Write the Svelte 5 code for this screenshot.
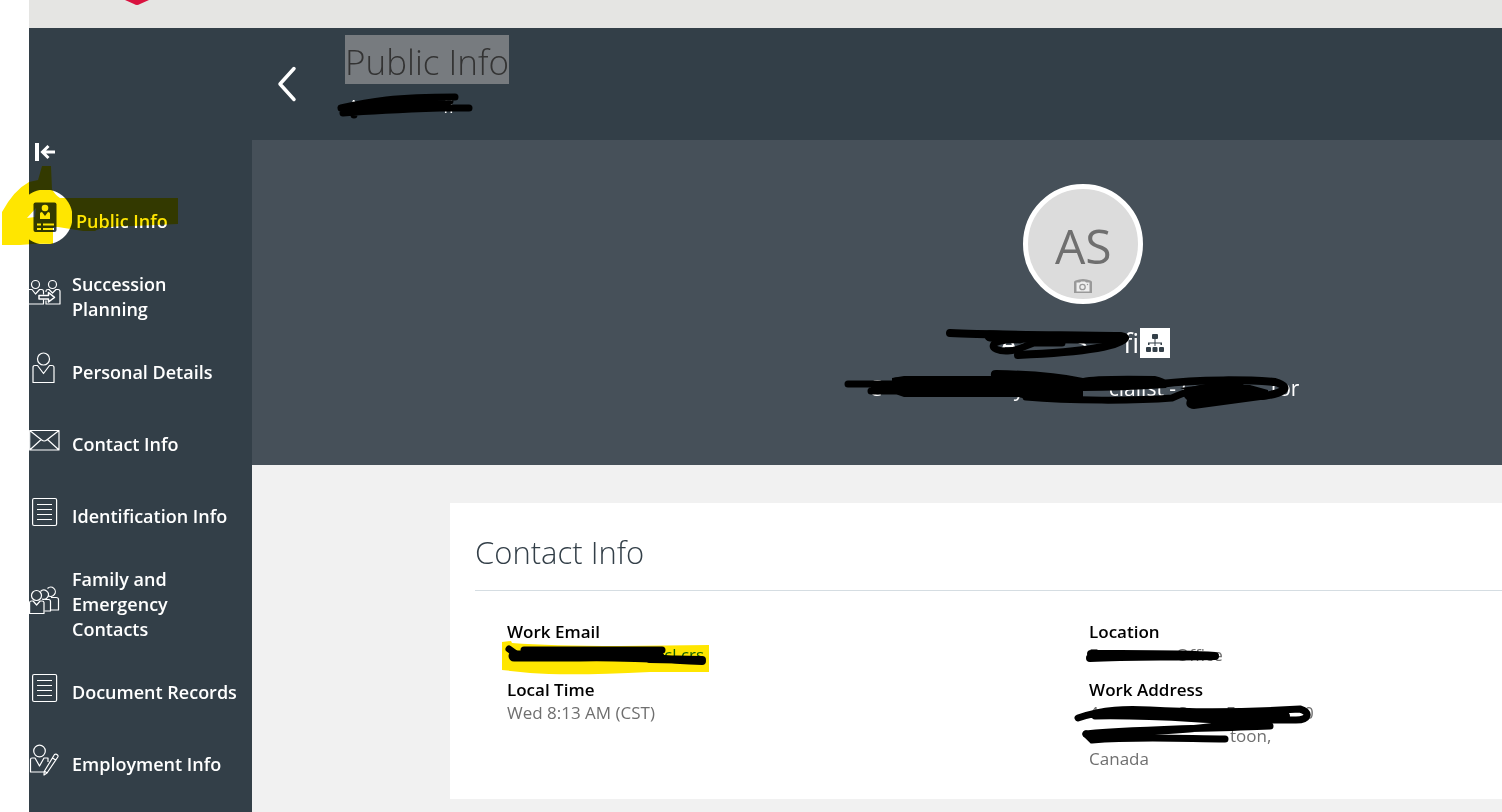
<script lang="ts">
	type Fragment = [text: string, span: number];

	const navItems = [
		{ label: 'Public Info', icon: 'badge', active: true },
		{ label: 'Succession Planning', icon: 'succession' },
		{ label: 'Personal Details', icon: 'person' },
		{ label: 'Contact Info', icon: 'mail' },
		{ label: 'Identification Info', icon: 'doc' },
		{ label: 'Family and Emergency Contacts', icon: 'family' },
		{ label: 'Document Records', icon: 'doc' },
		{ label: 'Employment Info', icon: 'employment' }
	];

	// what is left readable of each struck-out value, and how far it is to the next piece
	const subtitle: Fragment[] = [['A', 95], ['fi', 13]];
	const name: Fragment[] = [['A', 73], ['S', 50], ['fi', 17]];
	const jobTitle: Fragment[] = [['C', 145], ['y', 95], ['cialist - C', 162], ['tor', 27]];
	const email: Fragment[] = [['', 157], ['cl.crs', 38]];
	const location: Fragment[] = [['E', 87], ['Office', 46]];
	const street: Fragment[] = [['4', 89], ['St', 48], ['E', 78], ['0', 9]];
	const city: Fragment[] = [['', 141], ['toon,', 42]];
</script>

{#snippet pieces(list: Fragment[])}
	{#each list as [text, span]}
		<span class="piece" style="flex-grow: {span}">{text}</span>
	{/each}
{/snippet}

<div class="page">
	<div class="brand">
		<svg width="26" height="6" viewBox="0 0 26 6" aria-hidden="true">
			<path d="M1 0h24l-9 4q-3 2-6 0z" fill="#d9123f" />
		</svg>
	</div>

	<div class="shell">
		<nav>
			<button class="collapse" aria-label="Collapse menu">
				<svg width="22" height="20" viewBox="0 0 22 20" fill="none" stroke="#fff">
					<path d="M2 1v18" stroke-width="4" />
					<path d="M20 10H8M13.500 4L7.500 10l6 6" stroke-width="3" />
				</svg>
			</button>

			<ul>
				{#each navItems as item}
					<li>
						<a href="#top" class:active={item.active}>
							<span class="icon">
								<svg
									width="32"
									height="32"
									viewBox="0 0 32 32"
									fill="none"
									stroke="#fff"
									stroke-width="1.2"
									stroke-linejoin="round"
									aria-hidden="true"
								>
									{#if item.icon === 'badge'}
										<rect x="4.500" y="1.500" width="23" height="29.500" rx="2" fill="#333f48" stroke="none" />
										<g fill="#fff" stroke="none">
											<circle cx="16" cy="7" r="3.300" />
											<path d="M11 18v-5.500q0-1.500 2-1.500l3 4 3-4q2 0 2 1.500V18z" />
											<path d="M8 22.500h4v2H8zM14 22.500h11v2H14zM8 27h4v2H8zM14 27h11v2H14z" />
										</g>
									{:else if item.icon === 'succession'}
										<circle cx="6.500" cy="8.500" r="4" />
										<circle cx="23.500" cy="8.500" r="4" />
										<path d="M0 13.500h3l3.500 4.500 4-4.500h2q2 0 2 2v3M14.500 23.500v4.500H0" />
										<path d="M17 16v-1q0-1.500 2-1.500h1l3.500 3.500 3.500-3.500h2q2 0 2 2V28H17v-3.500" />
										<path d="M10 19.500h9.500v-3l6 4.800-6 4.700v-3H10z" stroke-width="1.500" />
									{:else if item.icon === 'person'}
										<circle cx="14.500" cy="7" r="6" />
										<path d="M8.500 13.500H6q-2 0-2 2V30.500h21V15.500q0-2-2-2h-2.500l-6 8z" />
									{:else if item.icon === 'mail'}
										<path d="M.7 6.500h29.300v19.500H.7zM.7 6.500l12 9.500q2.500 2 5 0L30 6.500M.7 26l11.500-10.500M30 26L18.500 15.500" />
									{:else if item.icon === 'doc'}
										<rect x="3.600" y="2.500" width="24" height="27" rx="1.500" />
										<path d="M8 8.500h15M8 13.500h15M8 18.500h15M8 23.500h15" />
									{:else if item.icon === 'family'}
										<circle cx="7.500" cy="11.500" r="5" />
										<path d="M11.500 7.500a4.600 4.600 0 1 1 1.500 7.500M18.500 4.500a4.600 4.600 0 1 1 .5 7" />
										<path d="M.6 29.500V18.500q0-1.500 2-1.500h1.500l3.500 4 3.500-4H13q2 0 2 1.500v11z" />
										<path d="M15.500 15.500h4q2 0 2 2v9.500h-6M22 13.500h5q2.500 0 2.500 2v10.500h-8" />
									{:else}
										<circle cx="10.500" cy="7" r="5.800" />
										<path d="M19 15v-1H15l-4.500 8-4.500-8H3q-1.500 0-1.500 1.500V28H15M19 14v4" />
										<path d="M25.500 10.500q1.500-1 3 .5.900.900.300 2L18 29l-3 2 .2-3.500zM23.500 14l3.200 2M15.200 27l3 2" />
									{/if}
								</svg>
							</span>
							<span class="label">{item.label}</span>
						</a>
						{#if item.active}
							<svg class="marker" width="178" height="82" viewBox="0 165 178 82" aria-hidden="true">
								<path
									fill="#ffe600"
									fill-rule="evenodd"
									d="M2 245V212Q14 190 29 182L38 180 42 166H51L52 189Q55 195 60 198H178V224L134 226Q102 226 95 231H83L58 227H53V244Q40 243 20 245ZM27 218L36 208 35 217Z"
								/>
							</svg>
						{/if}
					</li>
				{/each}
			</ul>
		</nav>

		<main id="top">
			<header>
				<button class="back" aria-label="Back">
					<svg width="20" height="36" viewBox="0 0 20 36" fill="none">
						<path
							d="M17 2.500L3 18l14 15.500"
							stroke="#fff"
							stroke-width="3.500"
							stroke-linecap="round"
							stroke-linejoin="round"
						/>
					</svg>
				</button>
				<div>
					<h1>Public Info</h1>
					<p class="struck subtitle">
						{@render pieces(subtitle)}
						<svg class="ink" viewBox="337 92 136 30" width="136" height="30" aria-hidden="true">
							<path
								d="M341 108C370 101 395 97 455 97M341 108H469M343 113C380 110 410 109 440 108M345 111C385 104 405 101 450 101M354 115V110M370 106H440"
							/>
						</svg>
					</p>
				</div>
			</header>

			<section class="hero">
				<div class="avatar">
					<span>AS</span>
					<svg width="18" height="14" viewBox="0 0 18 14" aria-hidden="true">
						<path d="M0 14V3q0-1 1.500-1.500Q9-1.500 16.500 1.500 18 2 18 3v11z" fill="#999" />
						<path d="M2.500 3.500h3.500l1-1h4l1 1h3.500V12.500h-13z" fill="#eee" />
						<circle cx="8.500" cy="8" r="2.700" fill="#eee" stroke="#999" stroke-width="1.300" />
						<circle cx="13.500" cy="5.500" r=".7" fill="#999" />
					</svg>
				</div>
				<div class="name-row">
					<h2 class="struck name">
						{@render pieces(name)}
						<svg class="ink" viewBox="942 324 196 40" width="196" height="40" aria-hidden="true">
							<path d="M950 333C990 335 1060 335 1120 336" stroke-width="8" />
							<path d="M990 336C1030 338 1080 338 1123 338" stroke-width="11" />
							<path d="M1020 340C985 338 988 352 1008 351C1018 351 1024 346 1034 343M1030 343H1062" />
							<path d="M1125 338C1122 345 1090 352 1018 355" stroke-width="8" />
						</svg>
					</h2>
					<button class="org" aria-label="Organization chart">
						<svg width="18" height="18" viewBox="0 0 18 18" fill="#333f48">
							<rect x="6" y="0" width="6" height="5" rx="1" />
							<path d="M8.500 5h1v3.500H16V11h-1.500V9.500h-5V12h-1V9.500h-5V11H2V8.500h6.500z" />
							<rect y="13" width="5" height="5" rx="1" />
							<rect x="6.500" y="13" width="5" height="5" rx="1" />
							<rect x="13" y="13" width="5" height="5" rx="1" />
						</svg>
					</button>
				</div>
				<p class="struck job">
					{@render pieces(jobTitle)}
					<svg class="ink" viewBox="842 366 460 46" width="460" height="46" aria-hidden="true">
						<path d="M848 384H900M871 391H905M896 381H1010" />
						<path
							class="solid"
							d="M892 378L904 376H991Q990 370 996 370Q1050 371 1083 378Q1095 375 1155 376Q1165 378 1169 383L1166 388Q1120 391 1083 391V400Q1040 403 1018 397H904Q892 394 892 388Z"
						/>
						<path d="M1026 397C1070 401 1135 401 1172 398C1190 390 1200 386 1240 385" />
						<path d="M1160 384C1200 379 1250 380 1275 382C1295 388 1280 394 1262 396" stroke-width="8" />
						<path
							class="solid"
							d="M1180 388Q1210 383 1250 385L1268 390V399L1194 409Q1184 408 1187 400Q1180 394 1188 391Z"
						/>
					</svg>
				</p>
			</section>

			<section class="card">
				<h3>Contact Info</h3>
				<dl>
					<div class="column">
						<div class="field">
							<dt>Work Email</dt>
							<dd>
								<a class="struck email" href="#top">
									{@render pieces(email)}
									<svg class="marker" viewBox="502 640 207 36" width="207" height="36" aria-hidden="true">
										<path
											fill="#ffe600"
											d="M502 642L511 641 512 643Q550 646 620 646L709 645V672L650 672Q570 676 530 673L502 670Z"
										/>
									</svg>
									<svg class="ink" viewBox="502 642 207 26" width="207" height="26" aria-hidden="true">
										<path d="M509 649L516 654M524 650H662" />
										<path d="M514 656H580C610 655 640 657 659 657" stroke-width="11" />
										<path d="M600 654C640 656 660 660 702 661M650 659L702 660" stroke-width="8" />
									</svg>
								</a>
							</dd>
						</div>
						<div class="field">
							<dt>Local Time</dt>
							<dd>Wed 8:13 AM (CST)</dd>
						</div>
					</div>
					<div class="column">
						<div class="field">
							<dt>Location</dt>
							<dd class="struck location">
								{@render pieces(location)}
								<svg class="ink" viewBox="1085 644 138 22" width="138" height="22" aria-hidden="true">
									<path d="M1091 654H1120C1150 654 1190 654 1215 656M1090 658C1130 656 1160 657 1215 656" stroke-width="8" />
								</svg>
							</dd>
						</div>
						<div class="field">
							<dt>Work Address</dt>
							<dd class="struck street">
								{@render pieces(street)}
								<svg class="ink" viewBox="1073 702 240 44" width="240" height="44" aria-hidden="true">
									<path d="M1078 718C1105 709 1125 709 1150 710C1200 713 1250 712 1300 709C1311 712 1309 720 1296 720H1220C1180 718 1145 715 1095 716" />
									<path d="M1100 714C1150 713 1180 714 1205 717L1285 716" stroke-width="10" />
									<path d="M1086 734C1140 729 1200 729 1270 726M1092 735C1140 732 1190 731 1230 724L1265 724" />
									<path d="M1086 734L1092 740C1140 736 1190 739 1225 739" />
								</svg>
							</dd>
							<dd class="struck city">{@render pieces(city)}</dd>
							<dd>Canada</dd>
						</div>
					</div>
				</dl>
			</section>
		</main>
	</div>
</div>

<style>
	:global(body) {
		background: #fff;
		overflow: hidden;
	}

	.page {
		display: flex;
		flex-direction: column;
		min-height: 100vh;
		padding-left: 29px;
		box-sizing: border-box;
		font-family: 'Open Sans', 'Noto Sans', sans-serif;
		color: #fff;
	}

	h1,
	h2,
	h3,
	p,
	dl,
	dd,
	ul {
		margin: 0;
		padding: 0;
	}

	button {
		display: flex;
		align-items: center;
		justify-content: center;
		padding: 0;
		border: 0;
		background: none;
		cursor: pointer;
	}

	a {
		color: inherit;
		text-decoration: none;
	}

	.brand {
		height: 28px;
		padding-left: 95px;
		background: #e5e5e3;
	}

	.brand svg {
		display: block;
	}

	.shell {
		display: flex;
		flex: 1;
		background: #f1f1f1;
	}

	nav {
		flex: 0 0 223px;
		background: #333f48;
	}

	.collapse {
		margin: 114px 0 0 6px;
	}

	ul {
		display: flex;
		flex-direction: column;
		gap: 29px;
		margin-top: 38px;
		list-style: none;
	}

	li {
		position: relative;
	}

	li a {
		display: flex;
		align-items: center;
		gap: 11px;
		min-height: 43px;
		padding-right: 8px;
		font-size: 18px;
		font-weight: 600;
		line-height: 25px;
	}

	.icon {
		flex: none;
		height: 32px;
		margin-bottom: 10px;
	}

	.icon svg {
		display: block;
	}

	li .active {
		gap: 15px;
	}

	/* round backdrop runs past the sidebar edge and is cut there */
	.active .icon {
		width: 43px;
		height: 54px;
		margin: -12px -11px -2px 0;
		background: radial-gradient(circle at 16px 27px, #fff 27px, transparent 28px);
	}

	.active .icon svg {
		margin-top: 11px;
	}

	.marker {
		position: absolute;
		mix-blend-mode: multiply;
		pointer-events: none;
	}

	li .marker {
		left: -29px;
		top: -35px;
	}

	main {
		flex: 1;
		min-width: 0;
	}

	header {
		display: flex;
		align-items: flex-start;
		gap: 48px;
		height: 112px;
		padding-left: 25px;
		box-sizing: border-box;
		background: #333f48;
	}

	.back {
		margin-top: 38px;
	}

	h1 {
		width: max-content;
		margin-top: 7px;
		padding-top: 4px;
		background: #777b7f;
		color: #333;
		font-size: 35px;
		font-weight: 300;
		line-height: 45px;
	}

	.struck {
		position: relative;
		display: flex;
		white-space: nowrap;
	}

	.piece {
		flex: 1 1 0;
		width: 0;
	}

	.ink {
		position: absolute;
		fill: none;
		stroke: #000;
		stroke-width: 7px;
		stroke-linecap: round;
		pointer-events: none;
	}

	.solid {
		fill: #000;
		stroke: none;
	}

	.subtitle {
		width: 108px;
		margin-left: 3px;
		margin-top: 10px;
		font-size: 18px;
		line-height: 25px;
	}

	.subtitle .ink {
		left: -11px;
		top: -2px;
	}

	.hero {
		display: flex;
		flex-direction: column;
		align-items: center;
		height: 325px;
		padding-top: 44px;
		padding-left: 33%;
		box-sizing: border-box;
		background: #465059;
	}

	.avatar {
		display: flex;
		flex-direction: column;
		align-items: center;
		width: 120px;
		height: 120px;
		box-sizing: border-box;
		border: 5px solid #fff;
		border-radius: 50%;
		background: #dcdcdc;
		color: #6f6f6f;
		font-size: 48px;
		line-height: 60px;
	}

	.avatar span {
		margin-top: 27px;
	}

	.avatar svg {
		margin-top: 3px;
	}

	.name-row {
		display: flex;
		align-items: center;
		margin-top: 24px;
		padding-left: 4px;
	}

	.name {
		width: 140px;
		font-size: 27px;
		font-weight: 400;
		line-height: 30px;
	}

	.name .ink {
		left: -58px;
		top: -4px;
	}

	.org {
		width: 30px;
		height: 30px;
		background: #fff;
	}

	.job {
		width: 429px;
		margin-top: 18px;
		font-size: 21px;
		line-height: 25px;
	}

	.job .ink {
		left: -27px;
		top: -10px;
	}

	.card {
		margin: 38px 0 13px 198px;
		padding: 24px 0 29px 25px;
		background: #fff;
	}

	h3 {
		padding-bottom: 13px;
		border-bottom: 1px solid #d5dde2;
		color: #333f48;
		font-size: 31px;
		font-weight: 300;
		line-height: 50px;
	}

	dl {
		display: grid;
		grid-template-columns: 58.5% 1fr;
		padding: 29px 0 0 32px;
		font-size: 17px;
		line-height: 23px;
	}

	.column {
		display: flex;
		flex-direction: column;
		gap: 12px;
	}

	dt {
		color: #000;
		font-weight: 600;
	}

	dd {
		color: #6f6f6f;
	}

	.email {
		width: 195px;
		color: #126b12;
	}

	.email .marker {
		left: -5px;
		top: -3px;
	}

	.email .ink {
		left: -5px;
		top: -1px;
	}

	.location {
		width: 133px;
	}

	.location .ink {
		left: -4px;
		top: 1px;
	}

	.street {
		width: 224px;
	}

	.street .ink {
		z-index: 1;
		left: -16px;
		top: 1px;
	}

	.city {
		width: 183px;
	}
</style>
